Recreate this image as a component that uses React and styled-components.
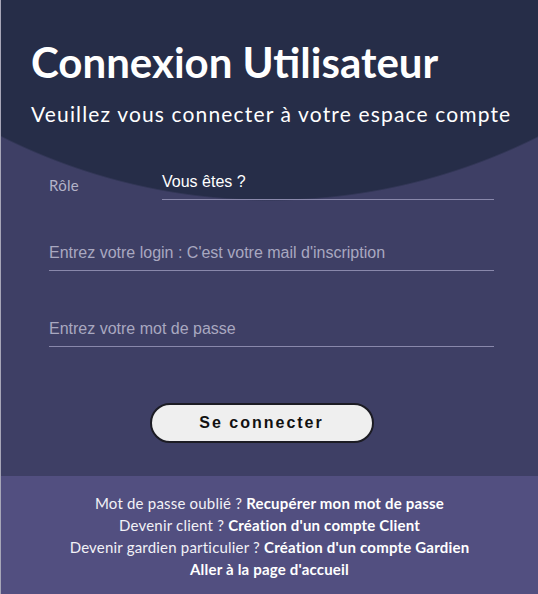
import React from "react";
import styled, { createGlobalStyle } from "styled-components";

const GlobalStyle = createGlobalStyle`
  html, body {
    margin: 0;
    padding: 0;
    background: #3e3f65;
  }
  * {
    box-sizing: border-box;
  }
`;

const Page = styled.div`
  width: 538px;
  height: 594px;
  display: flex;
  flex-direction: column;
  border-left: 1px solid #a7a6b8;
  overflow: hidden;
`;

const Main = styled.section`
  flex: 1;
  display: flex;
  flex-direction: column;
  background: radial-gradient(circle 600px at 269px -399px, #262d48 99.7%, #3e3f65 100%);
`;

const Header = styled.header`
  padding: 38px 0 0 30px;
  color: #ffffff;
`;

const Title = styled.h1`
  margin: 0;
  font-family: Lato, "Open Sans", sans-serif;
  font-weight: 700;
  font-size: 42px;
  line-height: 48px;
`;

const Subtitle = styled.p`
  margin: 16px 0 0;
  font-family: Lato, "Open Sans", sans-serif;
  font-size: 21px;
  line-height: 24px;
  letter-spacing: 1.15px;
`;

const Form = styled.form`
  display: flex;
  flex-direction: column;
  padding: 47px 44px 0 48px;
`;

const RoleRow = styled.div`
  display: flex;
  align-items: flex-end;
`;

const RoleLabel = styled.label`
  width: 113px;
  padding-bottom: 6px;
  font-family: Lato, "Open Sans", sans-serif;
  font-size: 15px;
  letter-spacing: 0.3px;
  color: #b3b2c8;
`;

const RoleSelect = styled.div`
  flex: 1;
  height: 27px;
  border-bottom: 1px solid #8988ab;
  font-family: "Liberation Sans", Arial, sans-serif;
  font-size: 16px;
  line-height: 18px;
  color: #ffffff;
`;

const Field = styled.input`
  width: 100%;
  height: 36px;
  margin-top: ${(p) => p.$gap}px;
  padding: 0;
  background: transparent;
  border: none;
  border-bottom: 1px solid #8988ab;
  outline: none;
  font-family: "Liberation Sans", Arial, sans-serif;
  font-size: 16px;
  color: #ffffff;

  &::placeholder {
    color: #a9a8c0;
    opacity: 1;
  }
`;

const Submit = styled.button`
  align-self: center;
  width: 224px;
  height: 40px;
  margin: 56px 0 0 -20px;
  background: #efefef;
  border: 2px solid #1c1c24;
  border-radius: 20px;
  font-family: "Liberation Sans", Arial, sans-serif;
  font-weight: 700;
  font-size: 16px;
  letter-spacing: 2px;
  color: #111111;
  cursor: pointer;
`;

const Footer = styled.footer`
  height: 118px;
  padding-top: 16px;
  background: #524f80;
  display: flex;
  flex-direction: column;
  align-items: center;
  font-family: Lato, "Open Sans", sans-serif;
  font-size: 15px;
  letter-spacing: 0.2px;
  line-height: 22px;
  color: #f2f2f7;
`;

const Line = styled.div`
  text-align: center;
`;

const Link = styled.a`
  font-weight: 700;
  color: #ffffff;
  text-decoration: none;
`;

export default function App() {
  return (
    <>
      <GlobalStyle />
      <Page>
        <Main>
          <Header>
            <Title>Connexion Utilisateur</Title>
            <Subtitle>Veuillez vous connecter à votre espace compte</Subtitle>
          </Header>
          <Form onSubmit={(e) => e.preventDefault()}>
            <RoleRow>
              <RoleLabel>Rôle</RoleLabel>
              <RoleSelect>Vous êtes ?</RoleSelect>
            </RoleRow>
            <Field $gap={35} type="email" placeholder="Entrez votre login : C'est votre mail d'inscription" />
            <Field $gap={40} type="password" placeholder="Entrez votre mot de passe" />
            <Submit type="submit">Se connecter</Submit>
          </Form>
        </Main>
        <Footer>
          <Line>
            Mot de passe oublié ? <Link href="#">Recupérer mon mot de passe</Link>
          </Line>
          <Line>
            Devenir client ? <Link href="#">Création d'un compte Client</Link>
          </Line>
          <Line>
            Devenir gardien particulier ? <Link href="#">Création d'un compte Gardien</Link>
          </Line>
          <Line>
            <Link href="#">Aller à la page d'accueil</Link>
          </Line>
        </Footer>
      </Page>
    </>
  );
}
